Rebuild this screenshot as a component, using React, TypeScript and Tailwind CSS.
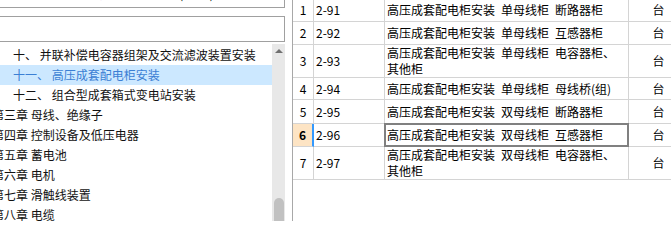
const treeItems = [
  { label: "十、 并联补偿电容器组架及交流滤波装置安装", sub: true },
  { label: "十一、 高压成套配电柜安装", sub: true, active: true },
  { label: "十二、 组合型成套箱式变电站安装", sub: true },
  { label: "第三章 母线、绝缘子" },
  { label: "第四章 控制设备及低压电器" },
  { label: "第五章 蓄电池" },
  { label: "第六章 电机" },
  { label: "第七章 滑触线装置" },
  { label: "第八章 电缆" },
];

const rows = [
  { no: "1", code: "2-91", lines: ["高压成套配电柜安装\u2002单母线柜\u2002断路器柜"], h: "h-[24px]" },
  { no: "2", code: "2-92", lines: ["高压成套配电柜安装\u2002单母线柜\u2002互感器柜"], h: "h-[23px]" },
  { no: "3", code: "2-93", lines: ["高压成套配电柜安装\u2002单母线柜\u2002电容器柜、", "其他柜"], h: "h-[33px]" },
  { no: "4", code: "2-94", lines: ["高压成套配电柜安装\u2002单母线柜\u2002母线桥(组)"], h: "h-[22px]" },
  { no: "5", code: "2-95", lines: ["高压成套配电柜安装\u2002双母线柜\u2002断路器柜"], h: "h-[24px]" },
  { no: "6", code: "2-96", lines: ["高压成套配电柜安装\u2002双母线柜\u2002互感器柜"], h: "h-[23px]", active: true },
  { no: "7", code: "2-97", lines: ["高压成套配电柜安装\u2002双母线柜\u2002电容器柜、", "其他柜"], h: "h-[33px]" },
];

export default function App() {
  return (
    <div
      className="w-[671px] h-[221px] overflow-hidden flex bg-white text-[12px] text-black"
      style={{ fontFamily: '"Noto Sans CJK SC", "Noto Sans", sans-serif' }}
    >
      {/* Left: chapter tree */}
      <div className="w-[285px] shrink-0 flex flex-col">
        <div className="relative h-[8px] overflow-hidden border-b border-r border-[#a0a0a0] -ml-[2px]">
          <span className="absolute left-[1px] bottom-[6px] leading-[14px] whitespace-nowrap">
            安装工程消耗量定额及统一基价表(2012)
          </span>
        </div>
        <div className="mt-[8px] h-[26px] border border-[#a0a0a0] -ml-[2px] bg-white" />
        <div className="mt-[2px] flex-1 flex min-h-0">
          <div className="flex-1 overflow-hidden pt-px">
            {treeItems.map((item, i) => (
              <div
                key={i}
                className={`h-[20px] flex items-center whitespace-nowrap leading-[20px] ${
                  item.active ? "bg-[#cce8ff] text-[#3b7fd4]" : "text-[#111]"
                } ${item.sub ? "pl-[13px]" : "-ml-[8px]"}`}
              >
                {item.label}
              </div>
            ))}
          </div>
          <div className="w-[13px] shrink-0 bg-[#e8e8e8] flex flex-col items-center">
            <div className="mt-[5px] w-0 h-0 border-l-[4px] border-r-[4px] border-b-[4px] border-l-transparent border-r-transparent border-b-[#707070]" />
            <div className="mt-auto w-[10px] h-[23px] bg-[#c1c1c1] rounded-t-full" />
          </div>
        </div>
      </div>

      {/* Gap */}
      <div className="w-[7px] shrink-0 bg-white" />

      {/* Right: quota table */}
      <div className="flex-1 overflow-hidden border-l border-[#a8a8a8]">
        <div className="-mt-[2px] w-[420px]">
          {rows.map((r) => (
            <div key={r.no} className={`flex ${r.h}`}>
              <div
                className={`w-[21px] shrink-0 border-b border-[#d4d4d4] flex items-center justify-center ${
                  r.active
                    ? "bg-[#fde4c4] font-bold border-r-2 border-r-[#3399ff]"
                    : "border-r"
                }`}
              >
                {r.no}
              </div>
              <div className="w-[71px] shrink-0 border-r border-b border-[#d4d4d4] flex items-center pl-[2px] leading-[16px]">
                {r.code}
              </div>
              <div className="relative w-[244px] shrink-0 border-r border-b border-[#d4d4d4] flex flex-col justify-center pl-[2px] leading-[16px] whitespace-pre">
                {r.lines.map((l, i) => (
                  <div key={i}>{l}</div>
                ))}
                {r.active && <div className="absolute -inset-px border-2 border-[#808080]" />}
              </div>
              <div className="w-[62px] shrink-0 border-r border-b border-[#d4d4d4] flex items-center justify-center pr-[2px]">
                台
              </div>
            </div>
          ))}
        </div>
      </div>
    </div>
  );
}
